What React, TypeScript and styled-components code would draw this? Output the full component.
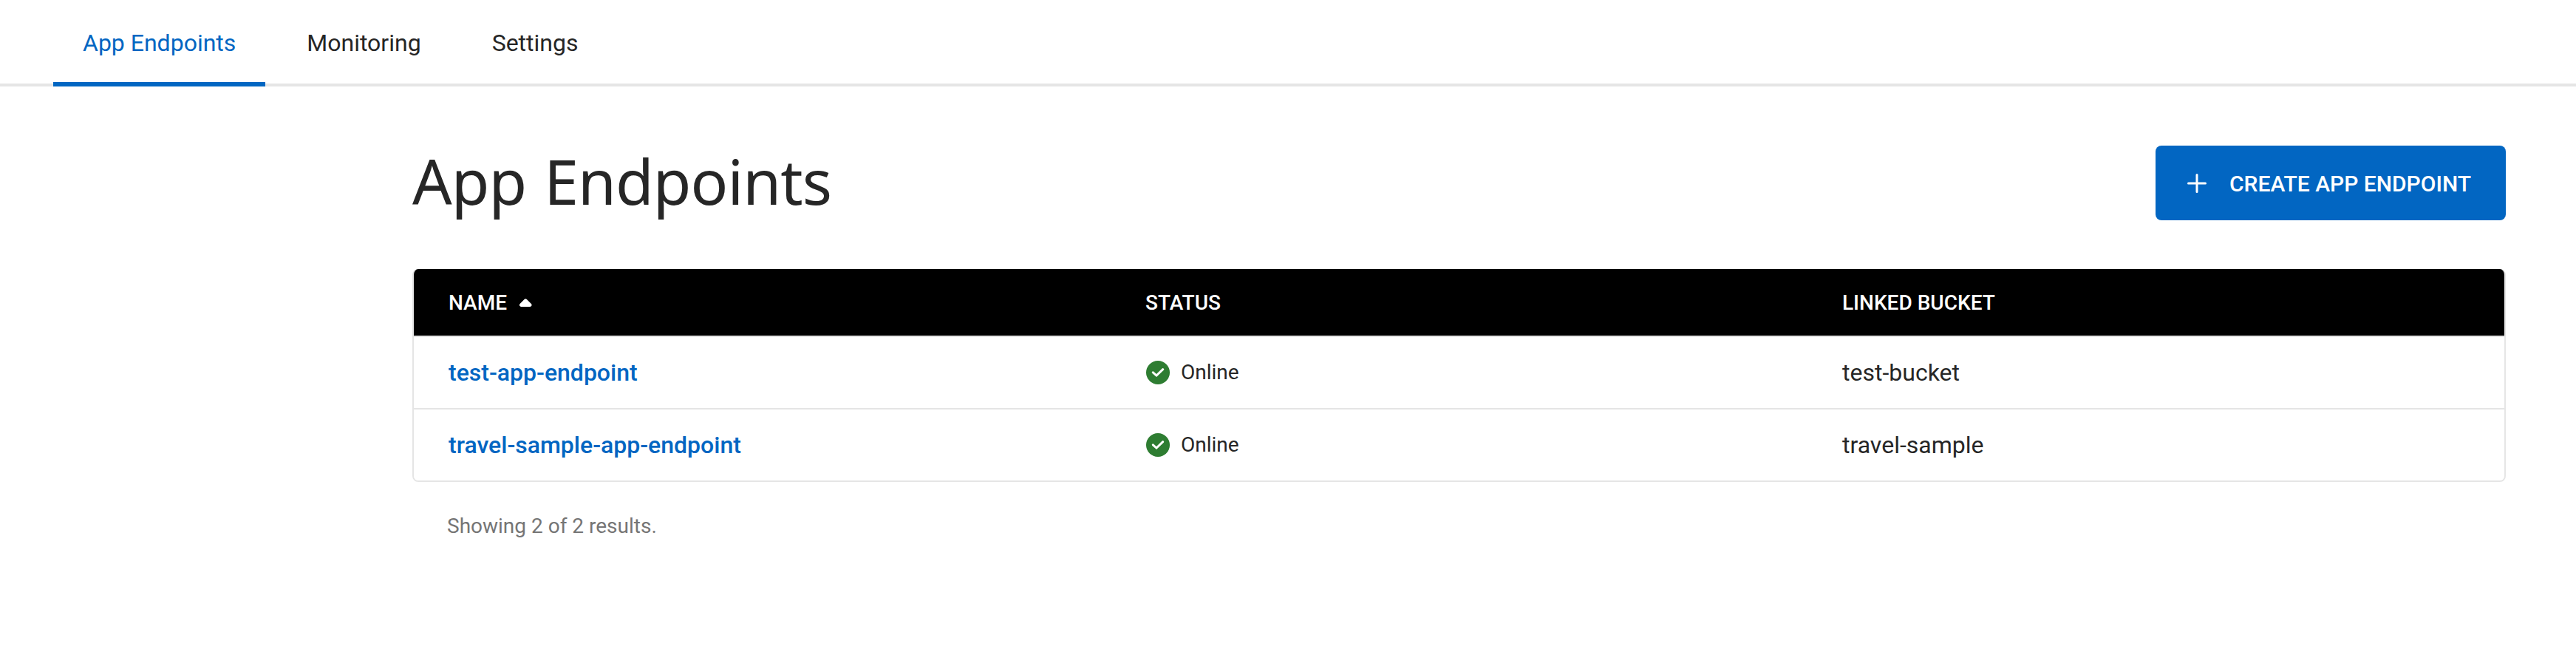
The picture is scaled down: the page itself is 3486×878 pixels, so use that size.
import React from 'react';
import styled, { createGlobalStyle } from 'styled-components';

const blue = '#0266c2';
const ink = '#262626';
const line = '#e5e5e5';

const GlobalStyle = createGlobalStyle`
  *, *::before, *::after { box-sizing: border-box; }
  body {
    margin: 0;
    background: #fff;
    color: ${ink};
    font-family: Roboto, "Liberation Sans", sans-serif;
    font-size: 32px;
  }
`;

const TabBar = styled.nav`
  display: flex;
  gap: 16px;
  height: 117px;
  padding-left: 72px;
  box-shadow: inset 0 -4px 0 ${line};
`;

const Tab = styled.a<{ $active?: boolean }>`
  padding: 38px 40px 33px;
  line-height: 40px;
  color: ${(p) => (p.$active ? blue : ink)};
  border-bottom: 6px solid ${(p) => (p.$active ? blue : 'transparent')};
`;

const Content = styled.main`
  margin: 80px 95px 0 558px;
`;

const PageHeader = styled.header`
  display: flex;
  justify-content: space-between;
  align-items: center;
  height: 101px;
  margin-bottom: 66px;
`;

const Title = styled.h1`
  margin: 0;
  padding-bottom: 6px;
  font: 400 84px/96px "Noto Sans", sans-serif;
  letter-spacing: -0.9px;
  word-spacing: 3px;
`;

const CreateButton = styled.button`
  display: flex;
  align-items: center;
  gap: 31px;
  width: 474px;
  height: 101px;
  padding: 0 0 0 43px;
  border: 0;
  border-radius: 8px;
  background: ${blue};
  color: #fff;
  font: 500 30px/36px Roboto, sans-serif;
  text-transform: uppercase;
  white-space: nowrap;
`;

const ButtonLabel = styled.span`
  padding-top: 2px;
`;

const Table = styled.div`
  border: 2px solid ${line};
  border-top: 0;
  border-radius: 8px;
  overflow: hidden;
`;

const Row = styled.div<{ $head?: boolean }>`
  display: grid;
  grid-template-columns: repeat(3, 1fr);
  height: ${(p) => (p.$head ? 90 : 98)}px;
  border-top: ${(p) => (p.$head ? '0' : `2px solid ${line}`)};
  background: ${(p) => (p.$head ? '#000' : '#fff')};
`;

const HeadCell = styled.div`
  display: flex;
  align-items: center;
  gap: 17px;
  padding-left: 47px;
  color: #fff;
  font-size: 28px;
  font-weight: 500;
  text-transform: uppercase;
`;

const Cell = styled.div`
  display: flex;
  align-items: center;
  padding-left: 47px;
`;

const EndpointLink = styled.a`
  color: ${blue};
  font-weight: 500;
`;

const Status = styled.span`
  display: flex;
  align-items: center;
  gap: 15px;
  padding-left: 1px;
  font-size: 28px;
`;

const StatusLabel = styled.span`
  padding-bottom: 2px;
`;

const Summary = styled.p`
  margin: 44px 0 0;
  padding-left: 47px;
  color: #757575;
  font-size: 28px;
  line-height: 32px;
`;

const PlusIcon = () => (
  <svg width="26" height="26" viewBox="0 0 26 26" fill="none" stroke="#fff" strokeWidth="3" strokeLinecap="round">
    <path d="M13 1.5v23M1.5 13h23" />
  </svg>
);

const SortIcon = () => (
  <svg width="17" height="11" viewBox="0 0 17 11" fill="#fff">
    <path d="M6.5.9Q8.2-.6 9.9.9L15.9 7Q17.2 8.6 16 10.1Q15.3 11 14 11H2.6Q1.2 11 .5 10.1Q-.7 8.6.6 7Z" />
  </svg>
);

const OnlineIcon = () => (
  <svg width="32" height="32" viewBox="0 0 32 32" fill="none">
    <circle cx="16" cy="16" r="16" fill="#2e7d32" />
    <path d="M9.3 15.8L14 20L22.7 11.7" stroke="#fff" strokeWidth="3" strokeLinecap="round" />
  </svg>
);

const endpoints = [
  { name: 'test-app-endpoint', status: 'Online', bucket: 'test-bucket' },
  { name: 'travel-sample-app-endpoint', status: 'Online', bucket: 'travel-sample' },
];

export default function App() {
  return (
    <>
      <GlobalStyle />
      <TabBar>
        <Tab $active>App Endpoints</Tab>
        <Tab>Monitoring</Tab>
        <Tab>Settings</Tab>
      </TabBar>
      <Content>
        <PageHeader>
          <Title>App Endpoints</Title>
          <CreateButton>
            <PlusIcon />
            <ButtonLabel>Create App Endpoint</ButtonLabel>
          </CreateButton>
        </PageHeader>
        <Table>
          <Row $head>
            <HeadCell>
              Name
              <SortIcon />
            </HeadCell>
            <HeadCell>Status</HeadCell>
            <HeadCell>Linked Bucket</HeadCell>
          </Row>
          {endpoints.map((e) => (
            <Row key={e.name}>
              <Cell>
                <EndpointLink>{e.name}</EndpointLink>
              </Cell>
              <Cell>
                <Status>
                  <OnlineIcon />
                  <StatusLabel>{e.status}</StatusLabel>
                </Status>
              </Cell>
              <Cell>{e.bucket}</Cell>
            </Row>
          ))}
        </Table>
        <Summary>Showing 2 of 2 results.</Summary>
      </Content>
    </>
  );
}
